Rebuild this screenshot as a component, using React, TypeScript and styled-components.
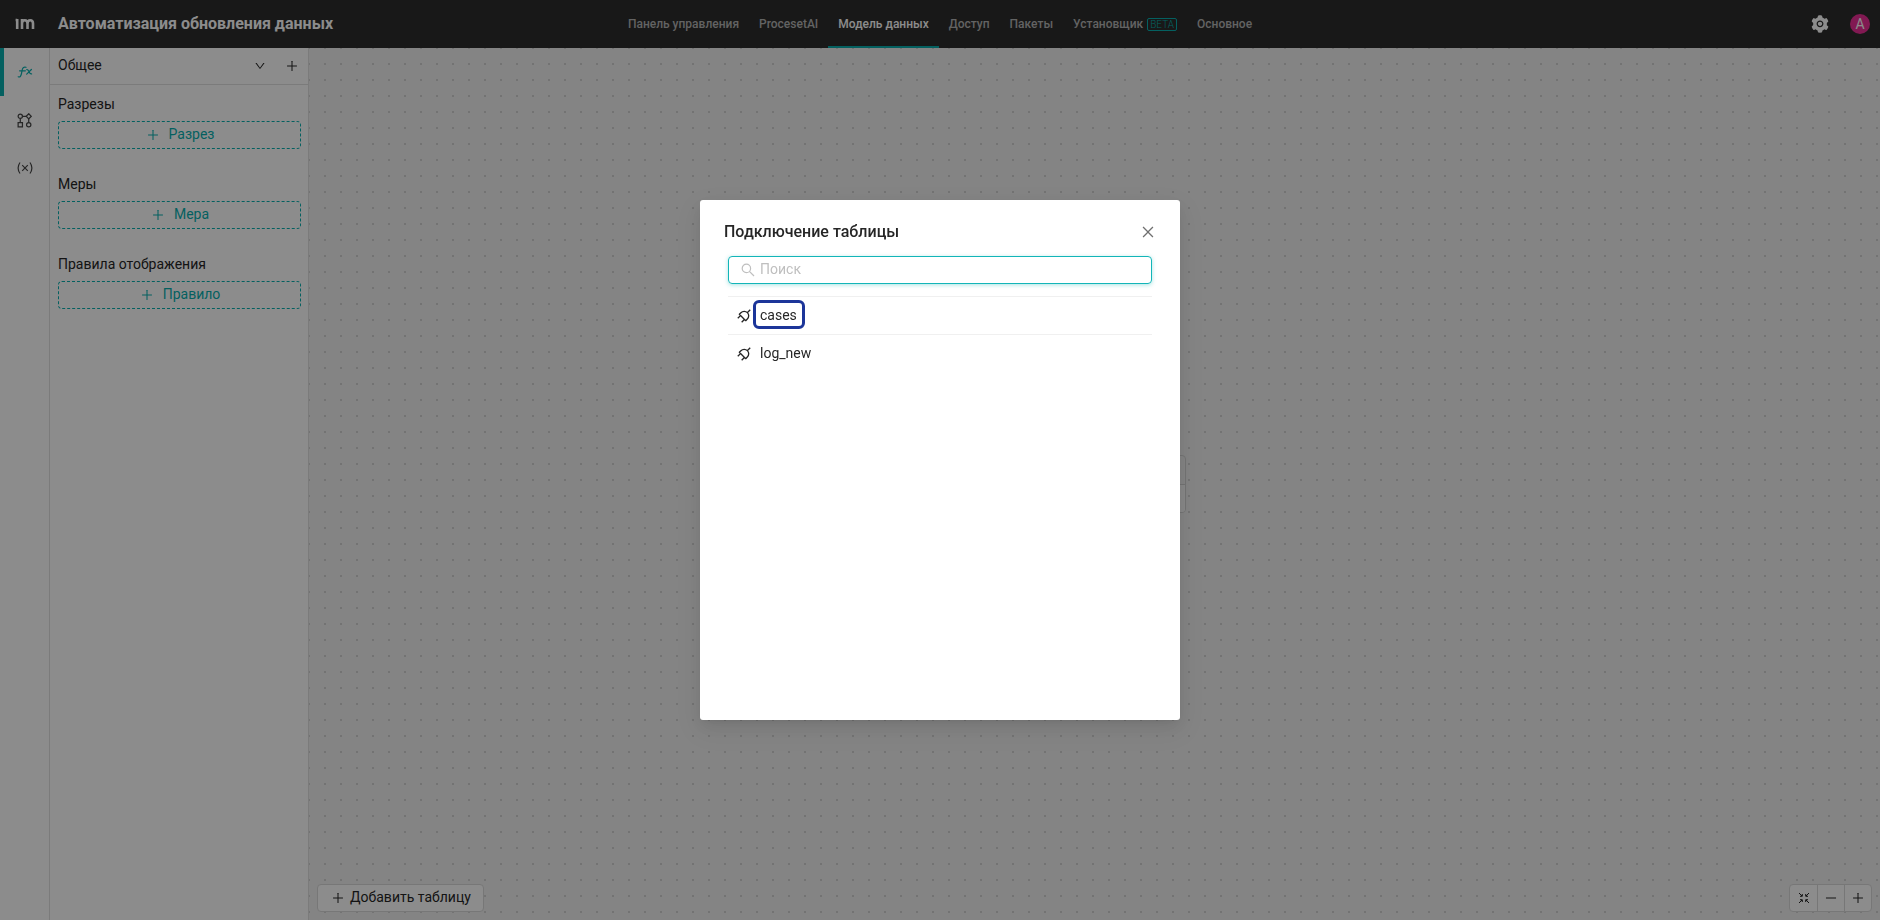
import React from "react";
import styled, { createGlobalStyle } from "styled-components";
import {
  AiFillSetting,
  AiOutlineClose,
  AiOutlineDown,
  AiOutlineMinus,
  AiOutlinePlus,
} from "react-icons/ai";

const color = {
  header: "#2c2c2c",
  teal: "#08b0b0",
  line: "#e0e0e0",
  text: "#262626",
  canvas: "#f0f0f0",
  dot: "#d2d2d2",
};

const GlobalStyle = createGlobalStyle`
  *, *::before, *::after { box-sizing: border-box; }
  body {
    margin: 0;
    font-family: Roboto, "Liberation Sans", sans-serif;
    font-size: 14px;
    line-height: 22px;
    color: ${color.text};
    background: #fff;
  }
  button, input { font: inherit; color: inherit; margin: 0; }
  button { background: none; border: 0; padding: 0; cursor: pointer; }
  h1, h2, h3, p, ul { margin: 0; padding: 0; font-weight: inherit; font-size: inherit; }
  ul { list-style: none; }
  a { color: inherit; text-decoration: none; }
  svg { display: block; flex: none; }
`;

const Page = styled.div`
  display: flex;
  flex-direction: column;
  min-height: 100vh;
`;

const Header = styled.header`
  display: grid;
  grid-template-columns: 1fr auto 1fr;
  height: 48px;
  background: ${color.header};
  color: #fff;
`;

const Brand = styled.div`
  display: flex;
  align-items: center;
  gap: 23px;
  padding-left: 15px;
`;

const ProjectTitle = styled.h1`
  font-size: 16px;
  font-weight: 700;
  line-height: 24px;
`;

const Nav = styled.nav`
  display: flex;
`;

const NavLink = styled.a<{ $active?: boolean }>`
  display: flex;
  align-items: center;
  gap: 4px;
  padding: 2px 10px 0;
  border-bottom: 2px solid ${(p) => (p.$active ? color.teal : "transparent")};
  color: ${(p) => (p.$active ? "#fff" : "#b4b4b4")};
  font-size: 12px;
  font-weight: 500;
`;

const BetaTag = styled.span`
  padding: 0 2px;
  border: 1px solid ${color.teal};
  border-radius: 2px;
  color: ${color.teal};
  font-size: 10px;
  font-weight: 300;
  line-height: 11px;
`;

const Account = styled.div`
  display: flex;
  align-items: center;
  justify-content: flex-end;
  gap: 20px;
  padding-right: 10px;
`;

const IconButton = styled.button`
  display: flex;
  align-items: center;
  justify-content: center;
`;

const Avatar = styled.button`
  width: 20px;
  height: 20px;
  border-radius: 50%;
  background: #eb2f96;
  color: #fff;
  font-size: 14px;
  line-height: 20px;
`;

const Body = styled.div`
  display: flex;
  flex: 1;
`;

const Rail = styled.nav`
  display: flex;
  flex-direction: column;
  width: 50px;
  border-right: 1px solid ${color.line};
`;

const RailButton = styled.button<{ $active?: boolean }>`
  display: flex;
  align-items: center;
  justify-content: center;
  height: 48px;
  padding-right: 4px;
  border-left: 4px solid ${(p) => (p.$active ? color.teal : "transparent")};
  color: ${(p) => (p.$active ? color.teal : "#484848")};
`;

const Sidebar = styled.aside`
  width: 259px;
  border-right: 1px solid ${color.line};
`;

const SidebarHead = styled.div`
  display: flex;
  align-items: center;
  gap: 19px;
  height: 37px;
  padding: 0 9px 0 8px;
  border-bottom: 1px solid ${color.line};
`;

const GroupPicker = styled.button`
  display: flex;
  flex: 1;
  align-items: center;
  justify-content: space-between;
`;

const ButtonLabel = styled.span`
  padding-bottom: 2px;
`;

const Sections = styled.div`
  display: flex;
  flex-direction: column;
  gap: 24px;
  padding: 8px 7px 8px 8px;
`;

const Section = styled.section`
  display: flex;
  flex-direction: column;
  gap: 6px;
`;

const DashedButton = styled.button`
  display: flex;
  align-items: center;
  justify-content: center;
  gap: 9px;
  height: 28px;
  padding-left: 1px;
  border: 1px dashed ${color.teal};
  border-radius: 4px;
  color: ${color.teal};
`;

const Canvas = styled.main`
  position: relative;
  flex: 1;
  display: grid;
  align-items: end;
  padding: 8px;
  background-color: ${color.canvas};
  background-image: radial-gradient(circle at 1px 1px, ${color.dot} 1px, transparent 0);
  background-size: 16px 16px;
  background-position: -1px -1px;
`;

const Placeholder = styled.div`
  position: absolute;
  top: 50%;
  left: 50%;
  transform: translate(-50%, -50%);
  width: 182px;
  border: 1px solid #d2d2d2;
  border-radius: 4px;
  background: ${color.canvas};
`;

const PlaceholderRow = styled.div`
  height: 28px;
  & + & {
    border-top: 1px solid #d2d2d2;
    border-radius: 0 0 3px 3px;
    background: #f8f8f8;
  }
`;

const CanvasBar = styled.div`
  display: flex;
  justify-content: space-between;
`;

const AddButton = styled.button`
  display: flex;
  align-items: center;
  gap: 5px;
  height: 28px;
  padding: 0 12px 0 13px;
  border: 1px solid #d9d9d9;
  border-radius: 4px;
  background: #fff;
`;

const ZoomGroup = styled.div`
  display: flex;
  height: 28px;
  border: 1px solid #d9d9d9;
  border-radius: 4px;
  background: #fff;
`;

const ZoomButton = styled(IconButton)`
  width: 27px;
  & + & { border-left: 1px solid #d9d9d9; }
`;

const Mask = styled.div`
  position: fixed;
  inset: 0;
  display: flex;
  align-items: flex-start;
  justify-content: center;
  padding: 200px 16px;
  background: rgba(0, 0, 0, 0.45);
`;

const Dialog = styled.div`
  display: flex;
  flex-direction: column;
  width: 480px;
  min-height: 520px;
  border-radius: 3px;
  background: #fff;
  box-shadow:
    0 3px 6px -4px rgba(0, 0, 0, 0.12),
    0 6px 16px 0 rgba(0, 0, 0, 0.08),
    0 9px 28px 8px rgba(0, 0, 0, 0.05);
`;

const DialogHead = styled.div`
  display: flex;
  align-items: center;
  justify-content: space-between;
  padding: 20px 24px 12px;
  color: #707070;
`;

const DialogTitle = styled.h2`
  color: ${color.text};
  font-size: 16px;
  font-weight: 500;
  line-height: 24px;
`;

const DialogBody = styled.div`
  display: flex;
  flex-direction: column;
  gap: 12px;
  padding: 0 28px;
`;

const SearchBox = styled.label`
  display: flex;
  align-items: center;
  gap: 5px;
  height: 28px;
  padding: 0 12px;
  border: 1px solid #13b5b8;
  border-radius: 4px;
  box-shadow: 0 1px 4px rgba(0, 179, 176, 0.35);
  color: #bfbfbf;
`;

const SearchInput = styled.input`
  flex: 1;
  min-width: 0;
  height: 24px;
  padding: 0 0 2px;
  border: 0;
  outline: 0;
  background: none;
  color: ${color.text};
  &::placeholder { color: #bfbfbf; opacity: 1; }
`;

const TableItem = styled.li`
  display: flex;
  align-items: center;
  gap: 2px;
  height: 38px;
  padding: 0 9px;
  border-top: 1px solid #f0f0f0;
`;

const TableButton = styled.button<{ $marked?: boolean }>`
  height: 29px;
  margin-bottom: 2px;
  padding: 1px 5px 0 4px;
  border: 3px solid ${(p) => (p.$marked ? "#1c3599" : "transparent")};
  border-radius: 6px;
`;

const Logo = () => (
  <svg width="20" height="12" viewBox="0 0 20 12" fill="none" stroke="#fff" strokeWidth="2.6" aria-hidden="true">
    <path d="M2.200 1V11M.6 2H2.200M7 11V1M7 5.500C7 1.200 12.500 1.200 12.500 5.500V11M12.500 5.500C12.500 1.200 18 1.200 18 5.500V11" />
  </svg>
);

const FunctionIcon = () => (
  <svg width="16" height="12" viewBox="0 0 16 12" fill="none" stroke="currentColor" strokeWidth="1.2" strokeLinecap="round" aria-hidden="true">
    <path d="M1.200 10.800C3.200 11.600 4 9.800 4.500 7.500L5.300 3.500C5.700 1.500 7 .7 9 1.300M2.600 4.800H8.400M9.800 3.600C12.400 2.800 11.800 8.700 14.600 7.900M14.400 3.500 9.700 8.200" />
  </svg>
);

const SchemaIcon = () => (
  <svg width="15" height="15" viewBox="0 0 16 16" fill="none" stroke="currentColor" strokeWidth="1.3" aria-hidden="true">
    <circle cx="3.5" cy="3.5" r="2.3" />
    <path d="M12.5 .8 15.2 3.5 12.5 6.2 9.8 3.5Z" />
    <circle cx="12.5" cy="12.5" r="2.3" />
    <path d="M1.2 10.2H5.8V14.8H1.2ZM5.8 3.5H9.8M12.5 6.2V10.2M3.5 5.8V10.2" />
  </svg>
);

const VariableIcon = () => (
  <svg width="16" height="12" viewBox="0 0 16 12" fill="none" stroke="currentColor" strokeWidth="1.2" aria-hidden="true">
    <path d="M3 .5C.6 4 .6 8 3 11.500M13 .5C15.400 4 15.400 8 13 11.500M5.200 3.200 10.800 8.800M10.800 3.200 5.200 8.800" />
  </svg>
);

const FitIcon = () => (
  <svg width="12" height="12" viewBox="0 0 12 12" fill="none" stroke="currentColor" strokeWidth="1" aria-hidden="true">
    <path d="M1 1 4 4M4.300 2V4.300H2M11 1 8 4M7.700 2V4.300H10M1 11 4 8M4.300 10V7.700H2M11 11 8 8M7.700 10V7.700H10" />
  </svg>
);

const SearchIcon = () => (
  <svg width="14" height="14" viewBox="0 0 14 14" fill="none" stroke="currentColor" strokeWidth="1.2" aria-hidden="true">
    <circle cx="5.400" cy="5.400" r="4.200" />
    <path d="M8.400 8.400 13 13" />
  </svg>
);

const PlugIcon = () => (
  <svg width="14" height="14" viewBox="3 3 18 18" fill="none" stroke="currentColor" strokeWidth="1.7" strokeLinejoin="round" aria-hidden="true">
    <g transform="rotate(180 12 12)">
      <path d="M9.785 6l8.215 8.215l-2.054 2.054a5.810 5.810 0 1 1 -8.215 -8.215zM4 20l3.500 -3.500M15 4l-3.500 3.500M20 9l-3.500 3.500" />
    </g>
  </svg>
);

const navItems = [
  { label: "Панель управления" },
  { label: "ProcesetAI" },
  { label: "Модель данных", active: true },
  { label: "Доступ" },
  { label: "Пакеты" },
  { label: "Установщик", tag: "BETA" },
  { label: "Основное" },
];

const sections = [
  { title: "Разрезы", action: "Разрез" },
  { title: "Меры", action: "Мера" },
  { title: "Правила отображения", action: "Правило" },
];

const tables = [{ name: "cases", marked: true }, { name: "log_new" }];

export default function App() {
  return (
    <>
      <GlobalStyle />
      <Page>
        <Header>
          <Brand>
            <Logo />
            <ProjectTitle>Автоматизация обновления данных</ProjectTitle>
          </Brand>
          <Nav>
            {navItems.map((item) => (
              <NavLink key={item.label} href="#" $active={item.active}>
                {item.label}
                {item.tag && <BetaTag>{item.tag}</BetaTag>}
              </NavLink>
            ))}
          </Nav>
          <Account>
            <IconButton>
              <AiFillSetting size={20} />
            </IconButton>
            <Avatar>A</Avatar>
          </Account>
        </Header>
        <Body>
          <Rail>
            <RailButton $active>
              <FunctionIcon />
            </RailButton>
            <RailButton>
              <SchemaIcon />
            </RailButton>
            <RailButton>
              <VariableIcon />
            </RailButton>
          </Rail>
          <Sidebar>
            <SidebarHead>
              <GroupPicker>
                <ButtonLabel>Общее</ButtonLabel>
                <AiOutlineDown size={12} />
              </GroupPicker>
              <IconButton>
                <AiOutlinePlus size={14} />
              </IconButton>
            </SidebarHead>
            <Sections>
              {sections.map((section) => (
                <Section key={section.title}>
                  <h3>{section.title}</h3>
                  <DashedButton>
                    <AiOutlinePlus size={14} />
                    <ButtonLabel>{section.action}</ButtonLabel>
                  </DashedButton>
                </Section>
              ))}
            </Sections>
          </Sidebar>
          <Canvas>
            <Placeholder>
              <PlaceholderRow />
              <PlaceholderRow />
            </Placeholder>
            <CanvasBar>
              <AddButton>
                <AiOutlinePlus size={14} />
                <ButtonLabel>Добавить таблицу</ButtonLabel>
              </AddButton>
              <ZoomGroup>
                <ZoomButton>
                  <FitIcon />
                </ZoomButton>
                <ZoomButton>
                  <AiOutlineMinus size={14} />
                </ZoomButton>
                <ZoomButton>
                  <AiOutlinePlus size={14} />
                </ZoomButton>
              </ZoomGroup>
            </CanvasBar>
          </Canvas>
        </Body>
      </Page>
      <Mask>
        <Dialog role="dialog" aria-modal="true" aria-labelledby="dialog-title">
          <DialogHead>
            <DialogTitle id="dialog-title">Подключение таблицы</DialogTitle>
            <IconButton>
              <AiOutlineClose size={16} />
            </IconButton>
          </DialogHead>
          <DialogBody>
            <SearchBox>
              <SearchIcon />
              <SearchInput type="text" placeholder="Поиск" />
            </SearchBox>
            <ul>
              {tables.map((table) => (
                <TableItem key={table.name}>
                  <PlugIcon />
                  <TableButton $marked={table.marked}>{table.name}</TableButton>
                </TableItem>
              ))}
            </ul>
          </DialogBody>
        </Dialog>
      </Mask>
    </>
  );
}
